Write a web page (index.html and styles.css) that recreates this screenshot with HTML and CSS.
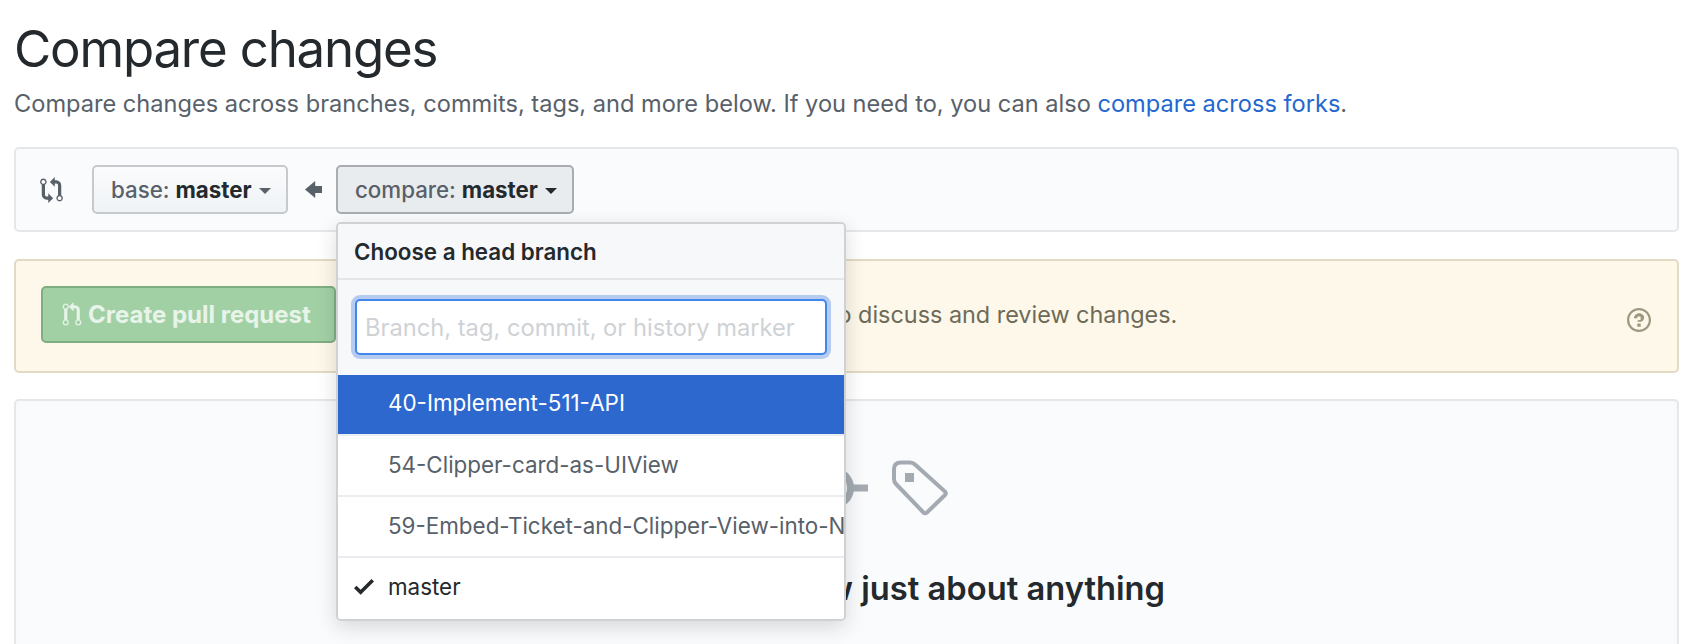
FILE: index.html
```html
<!DOCTYPE html>
<html lang="en">
<head>
<meta charset="utf-8">
<title>Compare changes</title>
<link rel="stylesheet" href="styles.css">
</head>
<body>
<main class="page">
  <h1 class="title">Compare changes</h1>
  <p class="lead">Compare changes across branches, commits, tags, and more below. If you need to, you can also <a class="link" href="#">compare across forks</a>.</p>

  <section class="range">
    <svg class="icon-compare" viewBox="0 0 14 16" aria-hidden="true"><path d="M5 12H4c-.27-.02-.48-.11-.69-.31-.21-.2-.3-.42-.31-.69V4.72A1.993 1.993 0 0 0 2 1a1.993 1.993 0 0 0-1 3.72V11c.03.78.34 1.47.94 2.06.6.59 1.28.91 2.06.94h1v2l3-3-3-3v2zM2 1.8c.66 0 1.2.55 1.2 1.2 0 .65-.55 1.2-1.2 1.2C1.35 4.2.8 3.65.8 3c0-.65.55-1.2 1.2-1.2zm11 9.48V5c-.03-.78-.34-1.47-.94-2.06-.6-.59-1.28-.91-2.06-.94H9V0L6 3l3 3V4h1c.27.02.48.11.69.31.21.2.3.42.31.69v6.28A1.993 1.993 0 0 0 12 15a1.993 1.993 0 0 0 1-3.72zm-1 2.92c-.66 0-1.2-.55-1.2-1.2 0-.65.55-1.2 1.2-1.2.65 0 1.2.55 1.2 1.2 0 .65-.55 1.2-1.2 1.2z"/></svg>
    <button class="select select-base" type="button">base: <b>master</b><span class="caret"></span></button>
    <svg class="icon-arrow" viewBox="0 0 10 10" aria-hidden="true"><path d="M6 0L0 5l6 5V7h4V3H6V0z"/></svg>
    <div class="select-wrap">
      <button class="select select-open" type="button">compare: <b>master</b><span class="caret"></span></button>
      <div class="menu">
        <div class="menu-head">Choose a head branch</div>
        <div class="menu-filter"><input class="filter-input" type="text" placeholder="Branch, tag, commit, or history marker"></div>
        <ul class="menu-list">
          <li class="item item-active">40-Implement-511-API</li>
          <li class="item">54-Clipper-card-as-UIView</li>
          <li class="item">59-Embed-Ticket-and-Clipper-View-into-NavigationController</li>
          <li class="item item-current">
            <svg class="icon-check" viewBox="0 0 12 10" aria-hidden="true"><path d="M12 2l-8 8-4-4 1.5-1.5L4 7l6.5-6.5L12 2z"/></svg>master
          </li>
        </ul>
      </div>
    </div>
  </section>

  <section class="notice">
    <button class="create" type="button">
      <svg class="icon-pr" viewBox="0 0 12 16" aria-hidden="true"><path d="M11 11.28V5c-.03-.78-.34-1.47-.94-2.06C9.46 2.35 8.78 2.03 8 2H7V0L4 3l3 3V4h1c.27.02.48.11.69.31.21.2.3.42.31.69v6.28A1.993 1.993 0 0 0 10 15a1.993 1.993 0 0 0 1-3.72zm-1 2.92c-.66 0-1.2-.55-1.2-1.2 0-.65.55-1.2 1.2-1.2.65 0 1.2.55 1.2 1.2 0 .65-.55 1.2-1.2 1.2zM4 3c0-1.11-.89-2-2-2a1.993 1.993 0 0 0-1 3.72v6.56A1.993 1.993 0 0 0 2 15a1.993 1.993 0 0 0 1-3.72V4.72c.59-.34 1-.98 1-1.72zm-.8 10c0 .66-.55 1.2-1.2 1.2-.65 0-1.2-.55-1.2-1.2 0-.65.55-1.2 1.2-1.2.65 0 1.2.55 1.2 1.2zM2 4.2C1.34 4.2.8 3.65.8 3c0-.65.55-1.2 1.2-1.2.65 0 1.2.55 1.2 1.2 0 .65-.55 1.2-1.2 1.2z"/></svg>
      Create pull request
    </button>
    <span class="notice-text">Choose different branches or forks above to discuss and review changes.</span>
    <svg class="icon-help" viewBox="0 0 14 14" aria-hidden="true"><path d="M6 9h2v2H6V9zm4-3.500C10 7.640 8 8 8 8H6c0-.550.450-1 1-1h.5c.280 0 .5-.220.5-.5v-1c0-.280-.220-.5-.5-.5h-1c-.280 0-.5.220-.5.5V6H4c0-1.500 1.500-3 3-3s3 1 3 2.500zM7 1.300c3.140 0 5.700 2.560 5.700 5.700s-2.560 5.700-5.700 5.700A5.710 5.710 0 0 1 1.300 7c0-3.140 2.560-5.700 5.700-5.700zM7 0C3.140 0 0 3.140 0 7s3.140 7 7 7 7-3.140 7-7-3.140-7-7-7z"/></svg>
  </section>

  <section class="blank">
    <div class="blank-icons">
      <svg class="icon-branch" viewBox="0 0 43 56" aria-hidden="true"><circle cx="9" cy="9" r="6"/><circle cx="9" cy="47" r="6"/><circle cx="34" cy="9" r="6"/><path d="M9 15v26M34 15c0 14-25 8-25 22"/></svg>
      <svg class="icon-commit" viewBox="0 0 56 56" aria-hidden="true"><circle cx="21" cy="28" r="17.500"/><path d="M38 28h18"/></svg>
      <svg class="icon-tag" viewBox="0 0 56 56" aria-hidden="true"><path d="M9 2.500h9q3 0 5 2l30 27q1.500 2 0 3.500L35 52.500q-2 1.500-3.500 0L4 24q-2-2-2-5V9q0-6.500 7-6.500z"/><rect class="tag-hole" x="13" y="13" width="9" height="9"/></svg>
    </div>
    <h2 class="blank-title">Compare and review just about anything</h2>
  </section>
</main>
</body>
</html>
```
FILE: styles.css
```css
* { box-sizing: border-box; }
html, body { margin: 0; height: 644px; overflow: hidden; background: #fff; }
body { font-family: Inter, "Liberation Sans", sans-serif; color: #24292e; }
.page { padding: 0 17px 0 14px; }

.title { margin: 0; padding-top: 17px; font-size: 51px; font-weight: 400; line-height: 64px; letter-spacing: -1.2px; color: #24292e; }
.lead { margin: 10px 0 0; font-size: 23.600px; line-height: 26px; color: #586069; }
.link { color: #2467cf; text-decoration: none; }

.range { display: flex; align-items: center; height: 85px; margin-top: 30px; padding-left: 24px; background: #fafbfc; border: 2px solid #e5e7ea; border-radius: 5px; }
.icon-compare { width: 23px; height: 26px; fill: #586069; margin-right: 29px; }
.icon-arrow { width: 17px; height: 17px; fill: #586069; margin: 0 14px 0 17px; }
.select { display: flex; align-items: center; height: 49px; padding: 0 17px; font: 500 22.300px Inter, "Liberation Sans", sans-serif; color: #586069; border: 2px solid #c6c9cd; border-radius: 5px; background: linear-gradient(#fafbfc, #eff3f6); white-space: pre; }
.select b { font-weight: 700; color: #24292e; }
.select-base { width: 196px; }
.select-open { width: 238px; background: #e9ecef; border-color: #a9acb1; }
.caret { width: 0; height: 0; margin-left: 7px; margin-top: 3px; border: 6px solid transparent; border-top-color: #586069; border-bottom: 0; }
.select-open .caret { border-top-color: #24292e; }
.select-wrap { position: relative; }

.menu { position: absolute; top: 57px; left: 0; z-index: 5; width: 510px; height: 399px; overflow: hidden; background: #fff; border: 2px solid #cfd1d3; border-radius: 5px; box-shadow: 0 6px 20px rgba(27, 31, 35, .16); }
.menu-head { height: 56px; padding: 0 16px; font-size: 22.400px; font-weight: 600; line-height: 55px; color: #24292e; background: #f6f8fa; border-bottom: 2px solid #e4e6e9; }
.menu-filter { height: 95px; padding: 19px 17px 0; background: #f6f8fa; }
.filter-input { display: block; width: 472px; height: 56px; padding: 0 8px; font: 400 23.700px Inter, "Liberation Sans", sans-serif; background: #fff; border: 2px solid #4286f0; border-radius: 5px; box-shadow: 0 0 0 4px #b5cbf0; outline: 0; }
.filter-input::placeholder { color: #cfd2d5; opacity: 1; }
.menu-list { margin: 0; padding: 0; list-style: none; }
.item { position: relative; height: 61px; padding: 0 3px 0 50px; overflow: hidden; font-size: 22.400px; line-height: 58px; white-space: nowrap; color: #586069; background: #fff; border-bottom: 2px solid #eaecef; }
.item-active { line-height: 56px; color: #fff; background: linear-gradient(#2d68ce 59px, #eaecef 59px); border-bottom: 0; }
.item-current { color: #24292e; border-bottom: 0; }
.icon-check { position: absolute; left: 16px; top: 20px; width: 20px; height: 17px; fill: #24292e; }

.notice { display: flex; align-items: center; height: 114px; margin-top: 27px; padding: 0 26px 0 25px; background: #fef8ea; border: 2px solid #e2dac5; border-radius: 5px; }
.create { display: flex; align-items: center; gap: 6px; width: 295px; height: 57px; margin-bottom: 4px; padding: 0 0 0 19px; font: 700 24px Inter, "Liberation Sans", sans-serif; color: #e8f4e9; background: #a2d0a5; border: 2px solid #7fae82; border-radius: 5px; }
.icon-pr { width: 20px; height: 25px; fill: #e8f4e9; }
.notice-text { margin-left: 27px; font-size: 23.400px; color: #6d6b58; margin-bottom: 4px; }
.icon-help { width: 24px; height: 24px; margin-left: auto; margin-top: 7px; fill: #9b9a80; }

.blank { height: 300px; margin-top: 26px; padding-top: 59px; background: #fafbfc; border: 2px solid #e5e7ea; border-radius: 5px; box-shadow: inset 0 0 8px rgba(27, 31, 35, .02); }
.blank-icons { display: flex; align-items: center; justify-content: center; gap: 24px; }
.blank-icons svg { height: 56px; fill: none; stroke: #a3aab1; stroke-width: 4; }
.icon-branch { width: 43px; }
.icon-commit { width: 56px; stroke-width: 7 !important; }
.icon-tag { width: 56px; }
.tag-hole { fill: #a3aab1; stroke: none; }
.blank-title { margin: 52px 0 0; font-size: 32.700px; font-weight: 600; line-height: 40px; text-align: center; color: #24292e; }
```
